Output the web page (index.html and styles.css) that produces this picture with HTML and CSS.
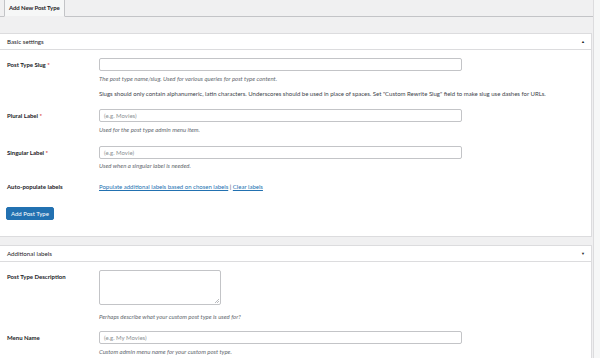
FILE: index.html
```html
<!DOCTYPE html>
<html>
<head>
<meta charset="utf-8">
<link rel="stylesheet" href="styles.css">
</head>
<body>
<div class="page">
  <div class="main">
    <div class="tabs"><span class="tab">Add New Post Type</span></div>

    <div class="panel">
      <div class="panel-header"><span>Basic settings</span><span class="arrow">&#9650;</span></div>
      <div class="panel-body first">
        <div class="row r1">
          <div class="label">Post Type Slug <span class="req">*</span></div>
          <div class="field">
            <div class="input"></div>
            <p class="desc">The post type name/slug. Used for various queries for post type content.</p>
            <p class="note">Slugs should only contain alphanumeric, latin characters. Underscores should be used in place of spaces. Set "Custom Rewrite Slug" field to make slug use dashes for URLs.</p>
          </div>
        </div>
        <div class="row r2">
          <div class="label">Plural Label <span class="req">*</span></div>
          <div class="field">
            <div class="input"><span class="ph">(e.g. Movies)</span></div>
            <p class="desc">Used for the post type admin menu item.</p>
          </div>
        </div>
        <div class="row r3">
          <div class="label">Singular Label <span class="req">*</span></div>
          <div class="field">
            <div class="input"><span class="ph">(e.g. Movie)</span></div>
            <p class="desc d3">Used when a singular label is needed.</p>
          </div>
        </div>
        <div class="row r4">
          <div class="label">Auto-populate labels</div>
          <div class="field links"><a href="#">Populate additional labels based on chosen labels</a> | <a href="#">Clear labels</a></div>
        </div>
        <div class="actions"><button class="button">Add Post Type</button></div>
      </div>
    </div>

    <div class="panel second">
      <div class="panel-header"><span>Additional labels</span><span class="arrow">&#9660;</span></div>
      <div class="panel-body">
        <div class="row r5">
          <div class="label">Post Type Description</div>
          <div class="field">
            <div class="textarea"><svg class="grip" width="4" height="4" viewBox="0 0 4 4"><path d="M4 0L0 4M4 2L2 4" stroke="#8c8f94" stroke-width="0.6"/></svg></div>
            <p class="desc d5">Perhaps describe what your custom post type is used for?</p>
          </div>
        </div>
        <div class="row r6">
          <div class="label">Menu Name</div>
          <div class="field">
            <div class="input"><span class="ph">(e.g. My Movies)</span></div>
            <p class="desc">Custom admin menu name for your custom post type.</p>
          </div>
        </div>
      </div>
    </div>
  </div>
  <div class="side"></div>
</div>
</body>
</html>
```
FILE: styles.css
```css
html, body {
  margin: 0;
  padding: 0;
  background: #f0f0f1;
  font-family: "Lato", "Open Sans", sans-serif;
  font-size: 6px;
  color: #1d2327;
  overflow: hidden;
  height: 358px;
}
.page {
  display: flex;
  height: 358px;
}
.main {
  flex: 1;
  min-width: 0;
}
.side {
  width: 6px;
  background: #f6f7f7;
  border-left: 1px solid #dcdcde;
}
.tabs {
  height: 16px;
  border-bottom: 1px solid #c3c4c7;
  padding-left: 4px;
  display: flex;
  align-items: flex-end;
}
.tab {
  display: block;
  height: 17px;
  line-height: 16px;
  margin-bottom: -1px;
  padding: 0 4px;
  border: 1px solid #c3c4c7;
  border-top: none;
  border-bottom: 1px solid #f0f0f1;
  background: #f6f7f7;
  font-weight: 700;
  box-sizing: border-box;
  white-space: nowrap;
  letter-spacing: -0.1px;
}
.panel {
  margin-top: 16px;
  background: #fff;
  border: 1px solid #dcdcde;
  border-left: none;
  margin-right: 1px;
}
.panel.second {
  margin-top: 8px;
}
.panel-header {
  height: 15px;
  border-bottom: 1px solid #dcdcde;
  display: flex;
  justify-content: space-between;
  align-items: center;
  padding: 0 6px 0 7px;
  font-size: 6.2px;
}
.arrow {
  font-size: 4px;
  color: #1d2327;
}
.panel-body {
  padding-bottom: 16px;
}
.row {
  display: flex;
}
.label {
  width: 99px;
  padding-left: 7px;
  box-sizing: border-box;
  font-weight: 700;
  line-height: 13px;
  flex: none;
}
.req {
  color: #d63638;
}
.field {
  flex: 1;
}
.input {
  width: 363px;
  height: 13px;
  box-sizing: border-box;
  border: 1px solid #c3c4c7;
  border-radius: 2px;
  background: #fff;
  line-height: 11px;
  padding-left: 4px;
}
.ph {
  color: #8c8f94;
}
.textarea {
  width: 122px;
  height: 35px;
  box-sizing: border-box;
  border: 1px solid #c3c4c7;
  border-radius: 2px;
  position: relative;
}
.grip {
  position: absolute;
  right: 1px;
  bottom: 1px;
}
p {
  margin: 0;
}
.desc {
  margin-top: 3px;
  line-height: 9px;
  font-style: italic;
  color: #646970;
}
.note {
  margin-top: 6px;
  line-height: 9px;
  color: #3c434a;
  white-space: nowrap;
}
.r1 { margin-top: 8px; }
.r2 { margin-top: 11px; }
.r3 { margin-top: 12px; }
.d3 { margin-top: 2px; }
.r4 { margin-top: 12px; }
.r4 .label, .links { line-height: 9px; }
.links a {
  color: #2271b1;
}
.links {
  color: #3c434a;
}
.actions {
  margin-top: 16px;
  padding-left: 6px;
}
.button {
  display: block;
  height: 13px;
  padding: 0 4px;
  background: #2271b1;
  color: #fff;
  border: 1px solid #2271b1;
  border-radius: 2px;
  font-family: inherit;
  font-size: 6px;
  font-weight: 400;
  line-height: 11px;
  white-space: nowrap;
}
.r5 { margin-top: 8px; }
.r5 .label { line-height: 14px; }
.d5 { margin-top: 7px; }
.r6 { margin-top: 10px; }
```
